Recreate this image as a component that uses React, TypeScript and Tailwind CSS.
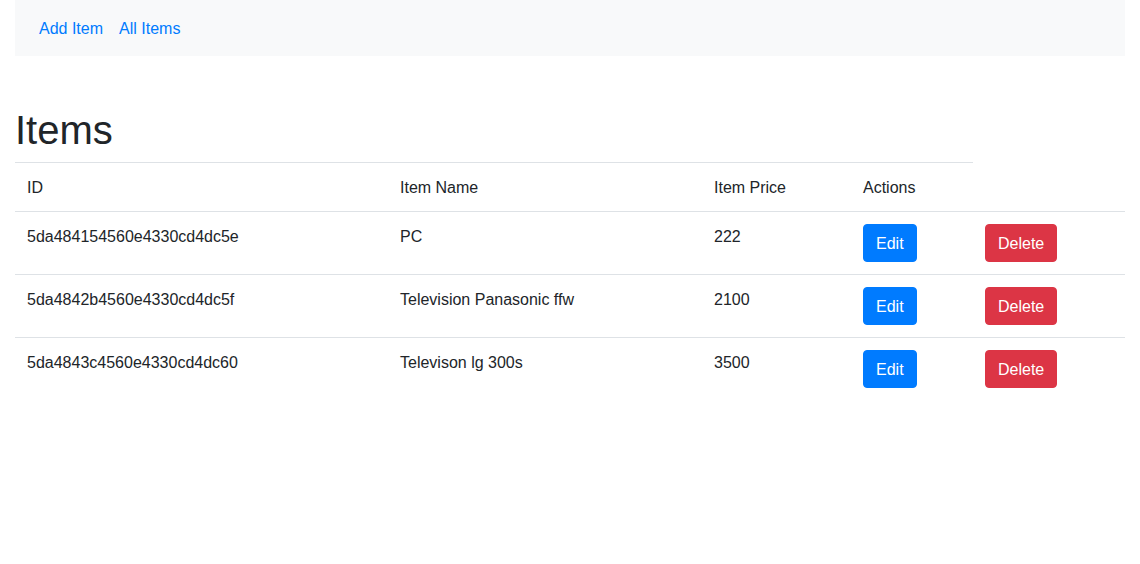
import React from "react";

type Item = { id: string; name: string; price: number };

const items: Item[] = [
  { id: "5da484154560e4330cd4dc5e", name: "PC", price: 222 },
  { id: "5da4842b4560e4330cd4dc5f", name: "Television Panasonic ffw", price: 2100 },
  { id: "5da4843c4560e4330cd4dc60", name: "Televison lg 300s", price: 3500 },
];

const cell = "border-t border-[#dee2e6] px-3 pt-[13px] pb-[11px] align-top text-left font-normal";
const actionCell = "border-t border-[#dee2e6] p-3 align-top text-left";
const btn =
  "inline-block rounded border px-3 pt-[7px] pb-[5px] text-base leading-6 text-white align-middle";

export default function App() {
  return (
    <div className="min-h-[564px] bg-white font-['Liberation_Sans',Arial,sans-serif] text-base leading-6 text-[#212529]">
      <div className="px-[15px]">
        <nav className="flex bg-[#f8f9fa] px-4 py-2">
          <a href="#" className="px-2 pt-[9px] pb-[7px] text-[#007bff]">
            Add Item
          </a>
          <a href="#" className="px-2 pt-[9px] pb-[7px] text-[#007bff]">
            All Items
          </a>
        </nav>

        <h1 className="mt-[50px] mb-2 text-[40px] font-medium leading-[1.2]">Items</h1>

        <table className="w-full table-fixed border-collapse">
          <colgroup>
            <col className="w-[373px]" />
            <col className="w-[314px]" />
            <col className="w-[149px]" />
            <col className="w-[122px]" />
            <col className="w-[152px]" />
          </colgroup>
          <thead>
            <tr>
              <th className={cell}>ID</th>
              <th className={cell}>Item Name</th>
              <th className={cell}>Item Price</th>
              <th className={cell}>Actions</th>
            </tr>
          </thead>
          <tbody>
            {items.map((item) => (
              <tr key={item.id}>
                <td className={cell}>{item.id}</td>
                <td className={cell}>{item.name}</td>
                <td className={cell}>{item.price}</td>
                <td className={actionCell}>
                  <button className={`${btn} border-[#007bff] bg-[#007bff]`}>Edit</button>
                </td>
                <td className={actionCell}>
                  <button className={`${btn} border-[#dc3545] bg-[#dc3545]`}>Delete</button>
                </td>
              </tr>
            ))}
          </tbody>
        </table>
      </div>
    </div>
  );
}
